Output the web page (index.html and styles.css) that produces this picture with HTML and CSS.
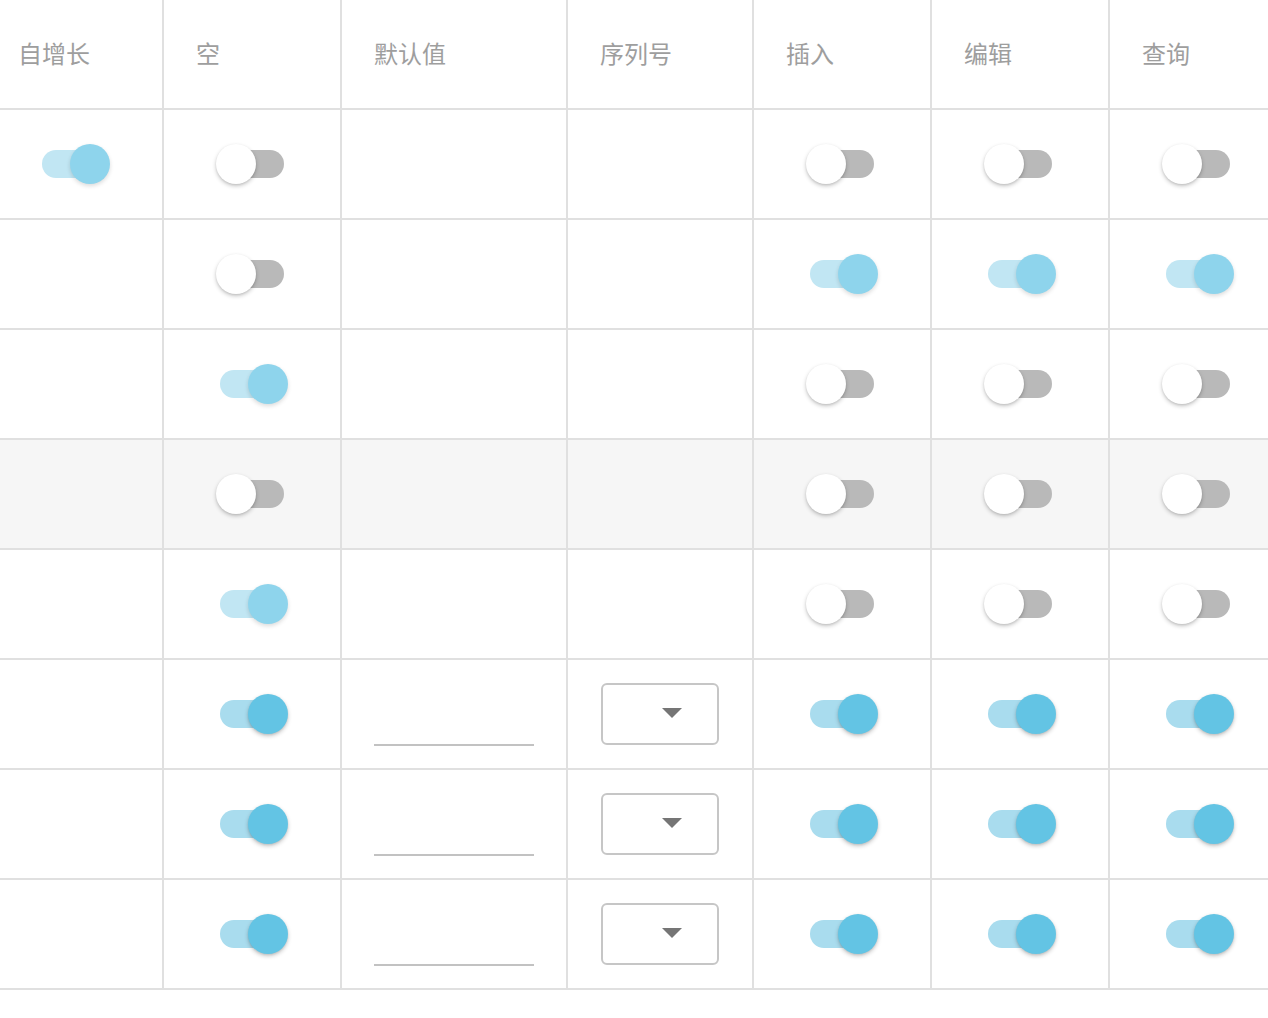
FILE: index.html
```html
<!DOCTYPE html>
<html lang="zh">
<head>
<meta charset="utf-8">
<title>字段表</title>
<link rel="stylesheet" href="styles.css">
</head>
<body>
<div class="viewport">
  <div class="table">
    <div class="row head">
      <div class="cell">自增长</div>
      <div class="cell">空</div>
      <div class="cell">默认值</div>
      <div class="cell">序列号</div>
      <div class="cell">插入</div>
      <div class="cell">编辑</div>
      <div class="cell">查询</div>
    </div>

    <div class="row">
      <div class="cell c"><span class="sw on soft"><i></i></span></div>
      <div class="cell c"><span class="sw"><i></i></span></div>
      <div class="cell c"></div>
      <div class="cell c"></div>
      <div class="cell c"><span class="sw"><i></i></span></div>
      <div class="cell c"><span class="sw"><i></i></span></div>
      <div class="cell c"><span class="sw"><i></i></span></div>
    </div>

    <div class="row">
      <div class="cell c"></div>
      <div class="cell c"><span class="sw"><i></i></span></div>
      <div class="cell c"></div>
      <div class="cell c"></div>
      <div class="cell c"><span class="sw on soft"><i></i></span></div>
      <div class="cell c"><span class="sw on soft"><i></i></span></div>
      <div class="cell c"><span class="sw on soft"><i></i></span></div>
    </div>

    <div class="row">
      <div class="cell c"></div>
      <div class="cell c"><span class="sw on soft"><i></i></span></div>
      <div class="cell c"></div>
      <div class="cell c"></div>
      <div class="cell c"><span class="sw"><i></i></span></div>
      <div class="cell c"><span class="sw"><i></i></span></div>
      <div class="cell c"><span class="sw"><i></i></span></div>
    </div>

    <div class="row hover">
      <div class="cell c"></div>
      <div class="cell c"><span class="sw"><i></i></span></div>
      <div class="cell c"></div>
      <div class="cell c"></div>
      <div class="cell c"><span class="sw"><i></i></span></div>
      <div class="cell c"><span class="sw"><i></i></span></div>
      <div class="cell c"><span class="sw"><i></i></span></div>
    </div>

    <div class="row">
      <div class="cell c"></div>
      <div class="cell c"><span class="sw on soft"><i></i></span></div>
      <div class="cell c"></div>
      <div class="cell c"></div>
      <div class="cell c"><span class="sw"><i></i></span></div>
      <div class="cell c"><span class="sw"><i></i></span></div>
      <div class="cell c"><span class="sw"><i></i></span></div>
    </div>

    <div class="row">
      <div class="cell c"></div>
      <div class="cell c"><span class="sw on"><i></i></span></div>
      <div class="cell l"><span class="field"></span></div>
      <div class="cell c"><span class="select"><b class="caret"></b></span></div>
      <div class="cell c"><span class="sw on"><i></i></span></div>
      <div class="cell c"><span class="sw on"><i></i></span></div>
      <div class="cell c"><span class="sw on"><i></i></span></div>
    </div>

    <div class="row">
      <div class="cell c"></div>
      <div class="cell c"><span class="sw on"><i></i></span></div>
      <div class="cell l"><span class="field"></span></div>
      <div class="cell c"><span class="select"><b class="caret"></b></span></div>
      <div class="cell c"><span class="sw on"><i></i></span></div>
      <div class="cell c"><span class="sw on"><i></i></span></div>
      <div class="cell c"><span class="sw on"><i></i></span></div>
    </div>

    <div class="row">
      <div class="cell c"></div>
      <div class="cell c"><span class="sw on"><i></i></span></div>
      <div class="cell l"><span class="field"></span></div>
      <div class="cell c"><span class="select"><b class="caret"></b></span></div>
      <div class="cell c"><span class="sw on"><i></i></span></div>
      <div class="cell c"><span class="sw on"><i></i></span></div>
      <div class="cell c"><span class="sw on"><i></i></span></div>
    </div>
  </div>
</div>
</body>
</html>
```

FILE: styles.css
```css
html, body {
  margin: 0;
  padding: 0;
  background: #ffffff;
}

body {
  font-family: "Noto Sans CJK SC", "Noto Sans", sans-serif;
  overflow: hidden;
}

.viewport {
  width: 1268px;
  height: 1018px;
  overflow: hidden;
}

.table {
  margin-left: -14px;
  width: 1302px;
}

.row {
  display: grid;
  grid-template-columns: 178px 178px 226px 186px 178px 178px 178px;
}

.row.hover {
  background: #f6f6f6;
}

.cell {
  box-sizing: border-box;
  height: 110px;
  border-right: 2px solid #e0e0e0;
  border-bottom: 2px solid #e0e0e0;
  display: flex;
  align-items: center;
}

.head .cell {
  padding-left: 32px;
  padding-bottom: 4px;
  font-size: 24px;
  color: #9e9e9e;
}

.cell.c {
  justify-content: center;
}

.cell.l {
  justify-content: flex-start;
  padding-left: 32px;
}

/* switch */
.sw {
  position: relative;
  display: block;
  width: 64px;
  height: 28px;
  border-radius: 14px;
  background: #b9b9b9;
}

.sw i {
  position: absolute;
  top: -6px;
  left: -4px;
  width: 40px;
  height: 40px;
  border-radius: 50%;
  background: #ffffff;
  box-shadow: 0 2px 4px rgba(0, 0, 0, 0.22), 0 1px 2px rgba(0, 0, 0, 0.08);
}

.sw.on {
  background: #a9dcee;
}

.sw.on i {
  left: 28px;
  background: #63c4e4;
  box-shadow: 0 2px 4px rgba(0, 0, 0, 0.22), 0 1px 2px rgba(0, 0, 0, 0.08);
}

.sw.on.soft {
  background: #c1e6f3;
}

.sw.on.soft i {
  background: #8ed4ec;
  box-shadow: 0 2px 4px rgba(0, 0, 0, 0.14);
}

/* text field */
.field {
  display: block;
  box-sizing: border-box;
  width: 160px;
  height: 64px;
  border-bottom: 2px solid #c2c2c2;
}

/* select */
.select {
  box-sizing: border-box;
  width: 118px;
  height: 62px;
  border: 2px solid #c6c6c6;
  border-radius: 6px;
  display: flex;
  align-items: center;
  justify-content: flex-end;
  padding-right: 35px;
  padding-bottom: 2px;
}

.caret {
  display: block;
  width: 0;
  height: 0;
  border-left: 10px solid transparent;
  border-right: 10px solid transparent;
  border-top: 10px solid #757575;
}
```
